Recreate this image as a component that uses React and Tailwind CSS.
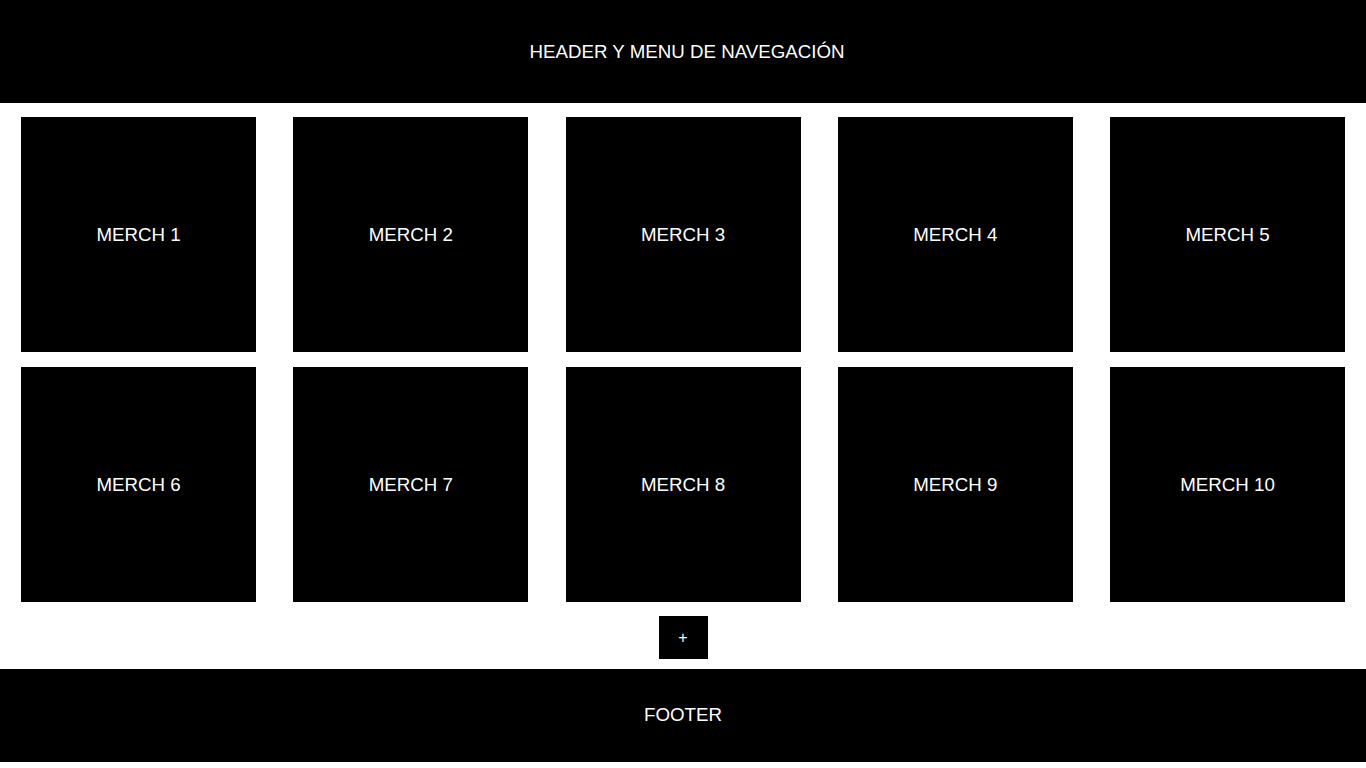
const items = Array.from({ length: 10 }, (_, i) => `MERCH ${i + 1}`);

export default function App() {
  return (
    <div className="min-h-screen bg-white font-['Liberation_Sans',Arial,sans-serif] text-white">
      <header className="h-[103px] bg-black flex items-center justify-center text-[18.72px] pt-px pl-2">
        HEADER Y MENU DE NAVEGACIÓN
      </header>

      <main className="px-[21px] pt-[14px]">
        <div className="grid grid-cols-[repeat(5,235px)] justify-between gap-y-[15px]">
          {items.map((label) => (
            <div key={label} className="h-[235px] bg-black flex items-center justify-center text-[18.72px] pt-px">
              {label}
            </div>
          ))}
        </div>
        <div className="flex justify-center pt-[14px] pb-[10px]">
          <button className="w-[49px] h-[43px] bg-black text-white text-[16px] flex items-center justify-center">
            +
          </button>
        </div>
      </main>

      <footer className="h-[93px] bg-black flex items-center justify-center text-[18.72px]">
        FOOTER
      </footer>
    </div>
  );
}
